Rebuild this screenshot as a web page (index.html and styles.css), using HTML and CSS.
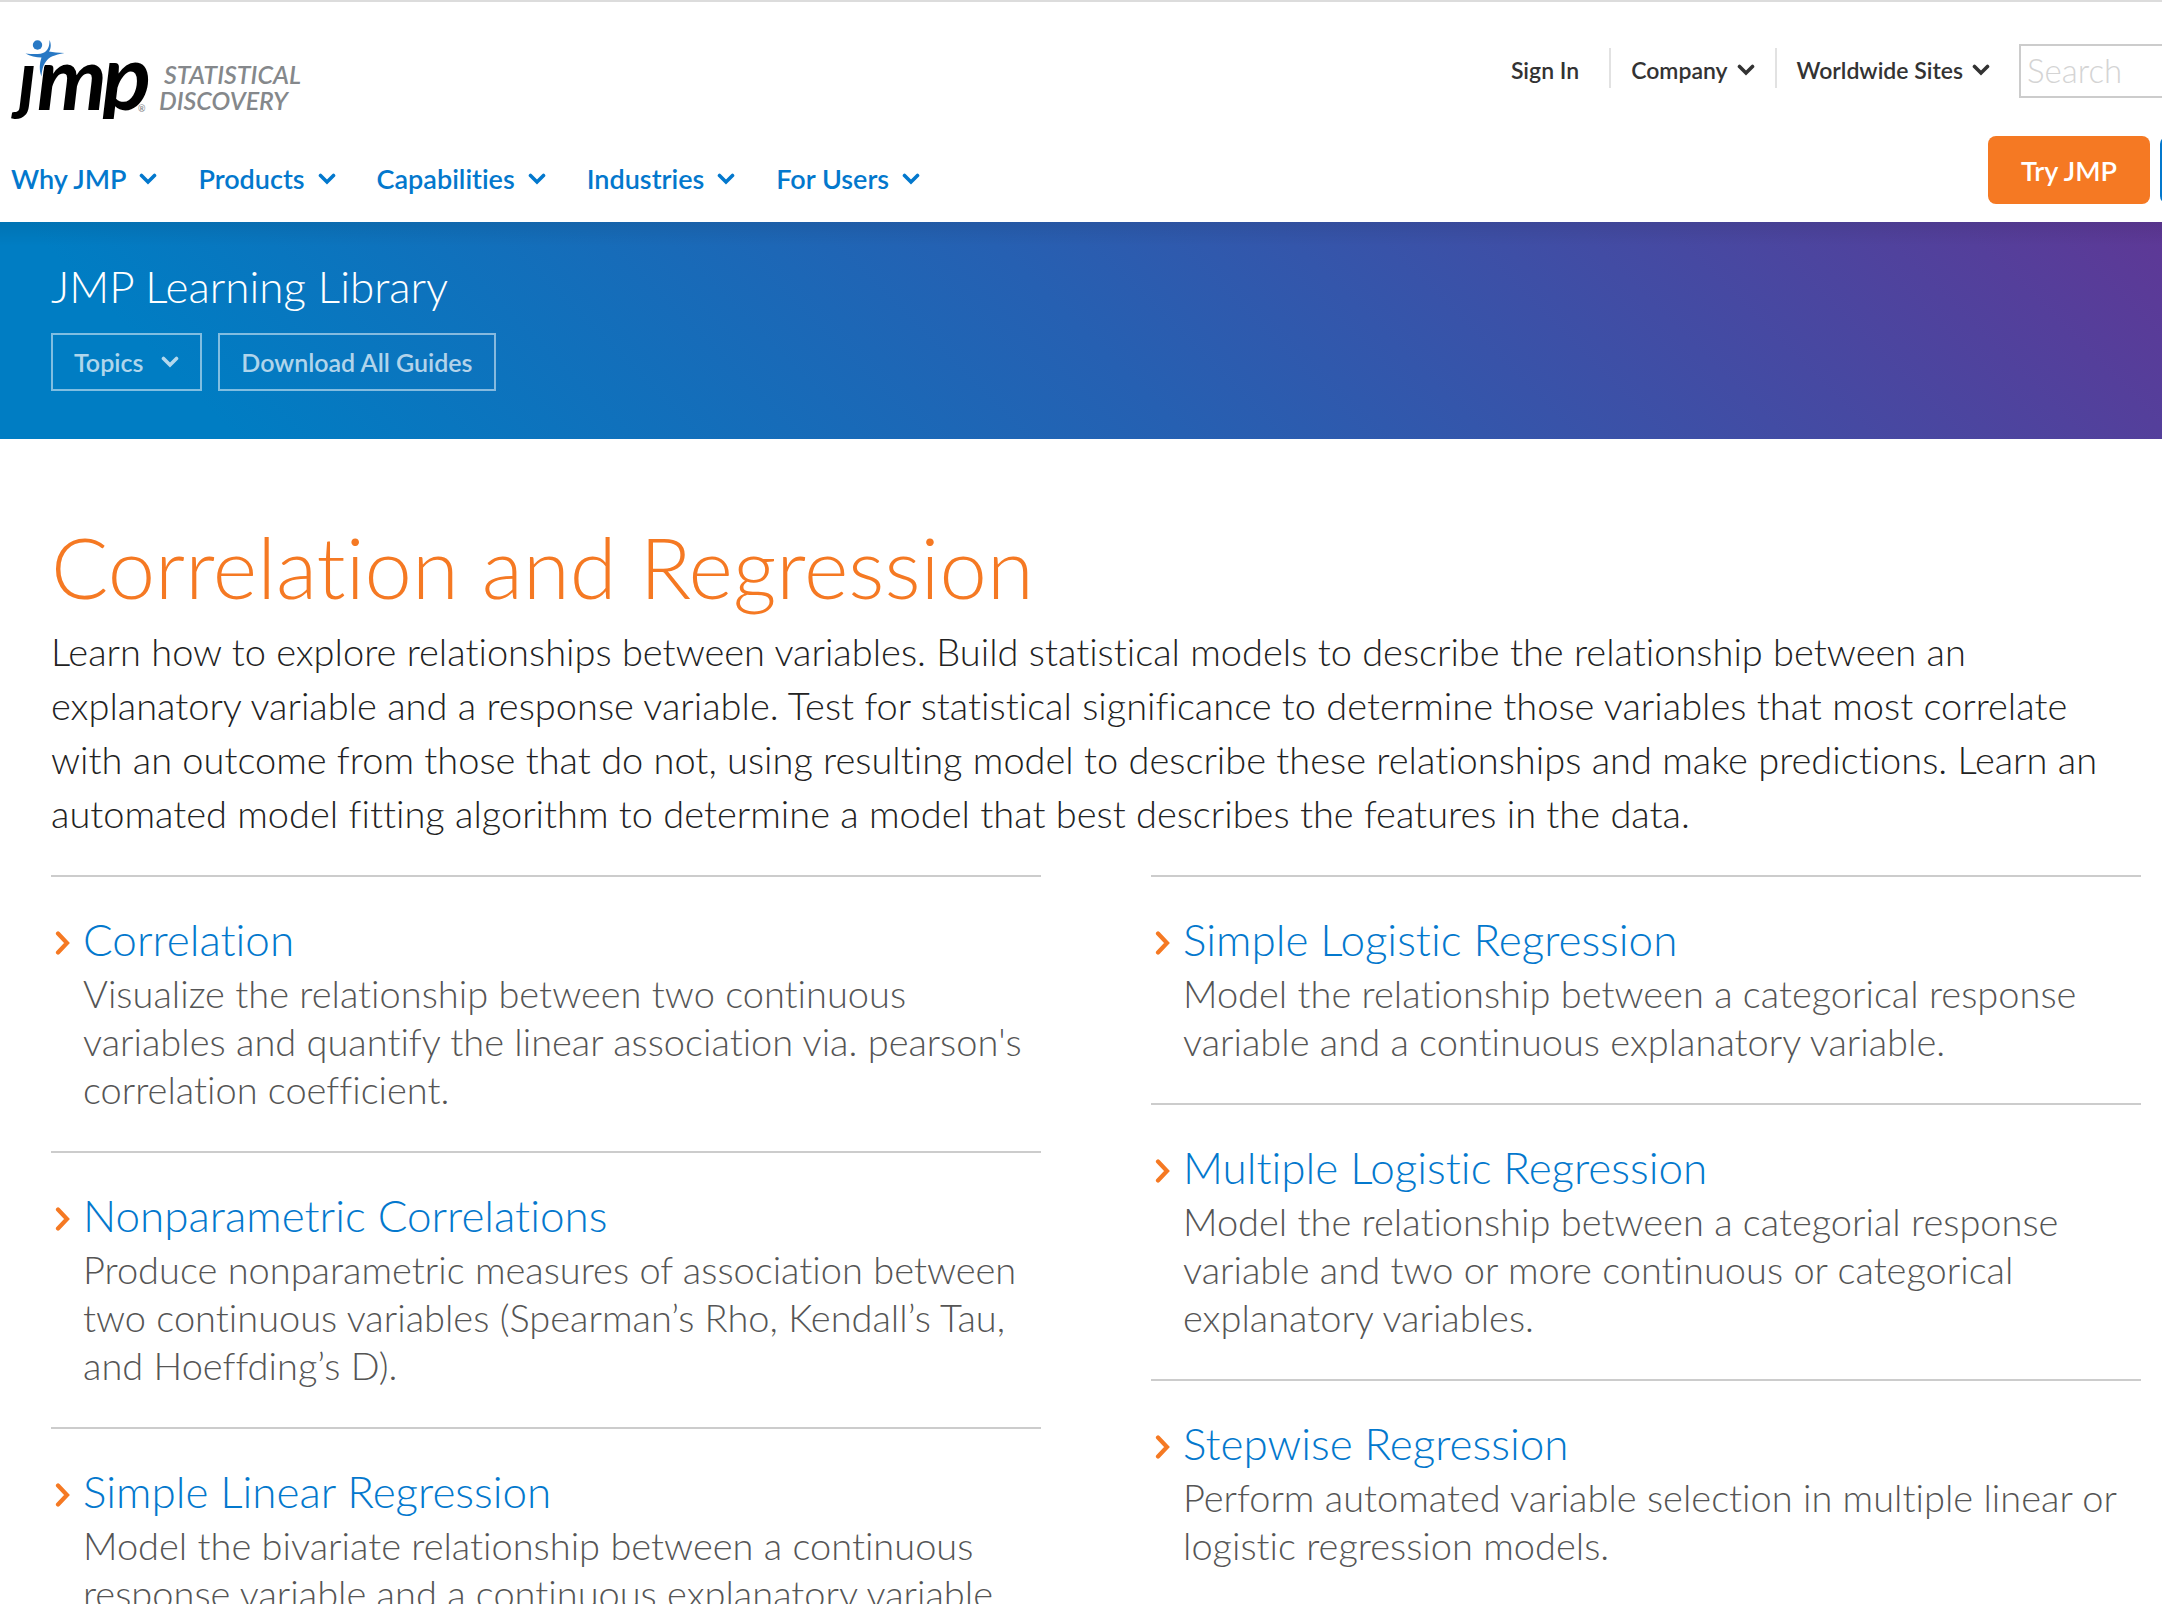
FILE: index.html
```html
<!DOCTYPE html>
<html lang="en">
<head>
<meta charset="utf-8">
<meta name="viewport" content="width=device-width, initial-scale=1">
<title>Correlation and Regression | JMP Learning Library</title>
<link rel="stylesheet" href="styles.css">
</head>
<body>
<svg class="sprite" aria-hidden="true">
  <symbol id="chev-down" viewBox="0 0 18 12"><path d="M2.500 2.500 9 9l6.500-6.500" fill="none" stroke="currentColor" stroke-width="3.600" stroke-linecap="round"/></symbol>
  <symbol id="chev-right" viewBox="0 0 16 24"><path d="M3 2.500 12 12 3 21.500" fill="none" stroke="currentColor" stroke-width="4.200" stroke-linecap="round"/></symbol>
</svg>
<header class="site-header">
  <div class="header-top">
    <a class="logo" href="#" aria-label="JMP Statistical Discovery">
      <svg width="320" height="134" viewBox="0 2 320 134">
        <text class="logo-word" y="110"><tspan class="logo-j" x="18" y="105">ȷ</tspan><tspan x="37" y="110">m</tspan><tspan class="logo-p" x="102" y="110">p</tspan></text>
        <rect x="90" y="119" width="40" height="10" fill="#fff"/>
        <g fill="#2878c4">
          <circle cx="37.500" cy="45" r="4.700"/>
          <path stroke="#fff" stroke-width="1.500" paint-order="stroke" d="M25.500 53.500C34 54.500 41 54.500 45 52c4-3 4.500-7.500 4.500-12C51.500 44 51 49 49 51.500c4 1 9 1 15.500 1.500C54 55 49 57 46 61.500c-3.500 5-4 9-4.500 15C39 70 39.500 63.500 41.500 57.500 36 57.500 30 56 25.500 53.500Z"/>
        </g>
        <g class="logo-tag">
          <text x="164" y="84">STATISTICAL</text>
          <text x="159" y="110">DISCOVERY</text>
          <text class="logo-reg" x="138" y="112">®</text>
        </g>
      </svg>
    </a>
    <nav class="utility" aria-label="Utility">
      <a href="#">Sign In</a>
      <a href="#">Company <svg class="chev"><use href="#chev-down"/></svg></a>
      <a href="#">Worldwide Sites <svg class="chev"><use href="#chev-down"/></svg></a>
      <input class="search" type="search" placeholder="Search" aria-label="Search">
    </nav>
  </div>
  <div class="header-main">
    <nav class="primary" aria-label="Primary">
      <a href="#">Why JMP <svg class="chev"><use href="#chev-down"/></svg></a>
      <a href="#">Products <svg class="chev"><use href="#chev-down"/></svg></a>
      <a href="#">Capabilities <svg class="chev"><use href="#chev-down"/></svg></a>
      <a href="#">Industries <svg class="chev"><use href="#chev-down"/></svg></a>
      <a href="#">For Users <svg class="chev"><use href="#chev-down"/></svg></a>
    </nav>
    <div class="cta">
      <button class="btn btn-try" type="button">Try JMP</button>
      <button class="btn btn-next" type="button" aria-label="Buy"></button>
    </div>
  </div>
</header>
<section class="hero">
  <h2 class="hero-title">JMP Learning Library</h2>
  <div class="hero-actions">
    <button class="ghost" type="button">Topics <svg class="chev"><use href="#chev-down"/></svg></button>
    <button class="ghost" type="button">Download All Guides</button>
  </div>
</section>
<main class="content">
  <h1 class="page-title">Correlation and Regression</h1>
  <p class="intro">Learn how to explore relationships between variables. Build statistical models to describe the relationship between an<br>
  explanatory variable and a response variable. Test for statistical significance to determine those variables that most correlate<br>
  with an outcome from those that do not, using resulting model to describe these relationships and make predictions. Learn an<br>
  automated model fitting algorithm to determine a model that best describes the features in the data.</p>
  <div class="columns">
    <ul class="guides">
      <li class="guide">
        <svg class="arrow"><use href="#chev-right"/></svg>
        <div><a class="guide-link" href="#">Correlation</a>
        <p class="guide-text">Visualize the relationship between two continuous<br>variables and quantify the linear association via. pearson's<br>correlation coefficient.</p></div>
      </li>
      <li class="guide">
        <svg class="arrow"><use href="#chev-right"/></svg>
        <div><a class="guide-link" href="#">Nonparametric Correlations</a>
        <p class="guide-text">Produce nonparametric measures of association between<br>two continuous variables (Spearman’s Rho, Kendall’s Tau,<br>and Hoeffding’s D).</p></div>
      </li>
      <li class="guide">
        <svg class="arrow"><use href="#chev-right"/></svg>
        <div><a class="guide-link" href="#">Simple Linear Regression</a>
        <p class="guide-text">Model the bivariate relationship between a continuous<br>response variable and a continuous explanatory variable.</p></div>
      </li>
    </ul>
    <ul class="guides">
      <li class="guide">
        <svg class="arrow"><use href="#chev-right"/></svg>
        <div><a class="guide-link" href="#">Simple Logistic Regression</a>
        <p class="guide-text">Model the relationship between a categorical response<br>variable and a continuous explanatory variable.</p></div>
      </li>
      <li class="guide">
        <svg class="arrow"><use href="#chev-right"/></svg>
        <div><a class="guide-link" href="#">Multiple Logistic Regression</a>
        <p class="guide-text">Model the relationship between a categorial response<br>variable and two or more continuous or categorical<br>explanatory variables.</p></div>
      </li>
      <li class="guide">
        <svg class="arrow"><use href="#chev-right"/></svg>
        <div><a class="guide-link" href="#">Stepwise Regression</a>
        <p class="guide-text">Perform automated variable selection in multiple linear or<br>logistic regression models.</p></div>
      </li>
    </ul>
  </div>
</main>
</body>
</html>
```

FILE: styles.css
```css
* { box-sizing: border-box; }
body {
  margin: 0;
  overflow-x: hidden;
  background: #fff;
  color: #222;
  font-family: Lato, "Open Sans", sans-serif;
  font-weight: 300;
  font-variant-ligatures: none;
}
a { color: inherit; text-decoration: none; }
button, input { font: inherit; }
.sprite { display: none; }
.chev { width: 18px; height: 12px; flex: none; }

.site-header {
  overflow: hidden;
  border-top: 2px solid #dcdcdc;
  background: #fff;
}
.header-top {
  display: flex;
  justify-content: space-between;
  align-items: flex-start;
}
.logo svg { display: block; }
.logo-word { font: italic 700 88px Lato, sans-serif; fill: #000; }
.logo-j { font-size: 76px; }
.logo-p { font-size: 91px; }
.logo-tag { font: italic 600 25px Lato, sans-serif; fill: #85888b; }
.logo-reg { font-size: 9px; font-style: normal; }
.utility {
  display: flex;
  align-items: flex-start;
  padding-top: 42px;
  margin-right: -160px;
  color: #333;
  font-size: 23px;
  font-weight: 600;
  white-space: nowrap;
}
.utility a {
  display: flex;
  align-items: center;
  gap: 9px;
  height: 40px;
  margin-top: 4px;
  padding: 3px 20px 0;
  border-left: 2px solid #e2e2e2;
}
.utility a:first-child { border-left: 0; padding-right: 30px; }
.search {
  width: 303px;
  height: 54px;
  margin-left: 9px;
  padding: 0 6px 2px;
  border: 2px solid #ccc;
  background: #fff;
  font-size: 33px;
  font-weight: 300;
}
.search::placeholder { color: #d4d4d4; opacity: 1; }
.header-main {
  display: flex;
  justify-content: space-between;
  height: 86px;
}
.primary {
  display: flex;
  gap: 41px;
  padding-left: 11px;
  color: #0378cd;
  font-size: 27px;
  font-weight: 600;
  line-height: 86px;
  white-space: nowrap;
}
.primary a { display: flex; align-items: center; gap: 13px; }
.cta { display: flex; gap: 10px; margin-right: -160px; }
.btn {
  width: 162px;
  height: 68px;
  padding: 0;
  border: 0;
  border-radius: 8px;
  background: #f57923;
  color: #fff;
  font-size: 27px;
  font-weight: 600;
}
.btn-next { background: #0378cd; }

.hero {
  padding: 36px 51px 48px;
  background:
    linear-gradient(rgba(0, 0, 0, .08), rgba(0, 0, 0, 0) 24px),
    linear-gradient(45deg, #007dc3 10%, #2660b2 50%, #5e3896 100%);
  color: #fff;
}
.hero-title { margin: 0 0 19px; font-size: 44px; font-weight: 300; line-height: 56px; }
.hero-actions { display: flex; gap: 16px; }
.ghost {
  display: flex;
  align-items: center;
  gap: 18px;
  height: 58px;
  padding: 0 21px;
  border: 2px solid rgba(255, 255, 255, .5);
  background: none;
  color: rgba(255, 255, 255, .7);
  font-size: 25px;
  font-weight: 600;
}

.content { padding: 75px 21px 0 51px; }
.page-title { margin: 0 0 6px; color: #f57923; font-size: 85px; font-weight: 300; line-height: 104px; }
.intro { margin: 0 0 35px; font-size: 38px; line-height: 54px; white-space: nowrap; }
.columns { display: grid; grid-template-columns: 1fr 1fr; gap: 110px; }
.guides { margin: 0; padding: 0; list-style: none; }
.guide {
  display: flex;
  gap: 12px;
  padding: 35px 0 38px;
  border-top: 2px solid #ccc;
}
.arrow { width: 16px; height: 24px; margin: 19px 0 0 4px; flex: none; color: #f57923; }
.guide-link { display: block; margin-bottom: 3px; color: #0378cd; font-size: 44px; line-height: 54px; }
.guide-text { margin: 0; color: #555; font-size: 38px; line-height: 48px; white-space: nowrap; }
```
